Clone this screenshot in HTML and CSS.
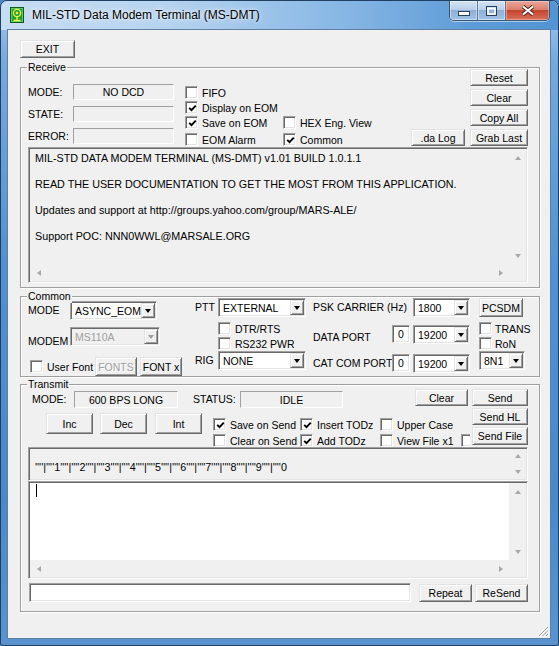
FILE: index.html
```html
<!DOCTYPE html>
<html>
<head>
<meta charset="utf-8">
<title>MS-DMT</title>
<link rel="stylesheet" href="styles.css">
</head>
<body>
<div class="window">
  <div class="titlebar">
    <svg class="appicon" width="14" height="16" viewBox="0 0 14 16">
      <rect x="0.5" y="0.5" width="13" height="15" fill="#23a03a" stroke="#0d5a1b"/>
      <rect x="1.5" y="1.5" width="11" height="13" fill="none" stroke="#5ccc6a"/>
      <circle cx="7" cy="6" r="3.6" fill="none" stroke="#f2ee3c" stroke-width="1.4"/>
      <circle cx="7" cy="6" r="1.3" fill="#f2ee3c"/>
      <path d="M7 9.5 V13 M3.5 13.5 H10.5" stroke="#f2ee3c" stroke-width="1.4" fill="none"/>
    </svg>
    <span class="title">MIL-STD Data Modem Terminal (MS-DMT)</span>
    <div class="caption">
      <div class="cap cap-min">
        <svg width="12" height="5" viewBox="0 0 12 5"><rect x="0.5" y="0.5" width="11" height="4" fill="#fff" stroke="#2b3f58"/></svg>
      </div>
      <div class="cap cap-max">
        <svg width="11" height="10" viewBox="0 0 11 10"><rect x="0.5" y="0.5" width="10" height="9" fill="none" stroke="#2b3f58"/><rect x="2" y="2.5" width="7" height="5.5" fill="none" stroke="#fff" stroke-width="1.6"/></svg>
      </div>
      <div class="cap cap-close">
        <svg width="14" height="11" viewBox="0 0 14 11"><path d="M2 1.5 L12 9.5 M12 1.5 L2 9.5" stroke="#4a1f1a" stroke-width="4" fill="none"/><path d="M2 1.5 L12 9.5 M12 1.5 L2 9.5" stroke="#fff" stroke-width="2.2" fill="none"/></svg>
      </div>
    </div>
  </div>

  <div class="client">
    <div class="btn btn-exit">EXIT</div>

    <div class="group g-receive">
      <span class="legend">Receive</span>
      <div class="rx-top">
        <div class="rx-fields">
          <div class="field-row"><span class="lbl rx-lbl">MODE:</span><div class="static rx-static">NO DCD</div></div>
          <div class="field-row"><span class="lbl rx-lbl">STATE:</span><div class="static rx-static"></div></div>
          <div class="field-row"><span class="lbl rx-lbl">ERROR:</span><div class="static rx-static"></div></div>
        </div>
        <div class="rx-checks">
          <div class="cb"><span class="box"></span><span>FIFO</span></div>
          <div class="cb"><span class="box"><svg width="9" height="9" viewBox="0 0 9 9"><path d="M1.2 3.8 L3.5 6.2 L7.8 1.6" fill="none" stroke="#000" stroke-width="1.9"/></svg></span><span>Display on EOM</span></div>
          <div class="cb"><span class="box"><svg width="9" height="9" viewBox="0 0 9 9"><path d="M1.2 3.8 L3.5 6.2 L7.8 1.6" fill="none" stroke="#000" stroke-width="1.9"/></svg></span><span>Save on EOM</span></div>
          <div class="cb cb-gap"><span class="box"></span><span>EOM Alarm</span></div>
        </div>
        <div class="rx-checks2">
          <div class="cb"><span class="box"></span><span>HEX Eng. View</span></div>
          <div class="cb cb-gap"><span class="box"><svg width="9" height="9" viewBox="0 0 9 9"><path d="M1.2 3.8 L3.5 6.2 L7.8 1.6" fill="none" stroke="#000" stroke-width="1.9"/></svg></span><span>Common</span></div>
        </div>
        <div class="btn btn-dalog">.da Log</div>
        <div class="rx-buttons">
          <div class="btn rx-btn">Reset</div>
          <div class="btn rx-btn">Clear</div>
          <div class="btn rx-btn">Copy All</div>
          <div class="btn rx-btn">Grab Last</div>
        </div>
      </div>
      <div class="memo rx-memo">
        <div class="memo-body rx-text">
          <p>MIL-STD DATA MODEM TERMINAL (MS-DMT) v1.01 BUILD 1.0.1.1</p>
          <p>READ THE USER DOCUMENTATION TO GET THE MOST FROM THIS APPLICATION.</p>
          <p>Updates and support at http://groups.yahoo.com/group/MARS-ALE/</p>
          <p>Support POC: NNN0WWL@MARSALE.ORG</p>
        </div>
        <div class="vscroll"><span class="arr arr-up"></span><span class="arr arr-down"></span></div>
        <div class="hscroll"><span class="arr arr-left"></span><span class="arr arr-right"></span></div>
        <div class="sb-corner"></div>
      </div>
    </div>

    <div class="group g-common">
      <span class="legend">Common</span>
      <div class="cm-col1">
        <div class="cm-row cm-r1">
          <span class="lbl cm-lbl">MODE</span>
          <div class="combo cm-mode"><span class="combo-text">ASYNC_EOM</span><span class="combo-btn"><i class="tri"></i></span></div>
        </div>
        <div class="cm-row cm-r2">
          <span class="lbl cm-lbl cm-lbl-low">MODEM</span>
          <div class="combo combo-disabled cm-modem"><span class="combo-text">MS110A</span><span class="combo-btn"><i class="tri"></i></span></div>
        </div>
        <div class="cm-row cm-r3">
          <div class="cb cb-userfont"><span class="box"></span><span class="userfont-lbl">User Font</span></div>
          <div class="btn btn-disabled btn-font btn-fonts">FONTS</div>
          <div class="btn btn-font btn-fontx">FONT x</div>
        </div>
      </div>
      <div class="cm-col2">
        <div class="cm-row ptt-row">
          <span class="lbl ptt-lbl">PTT</span>
          <div class="combo cm-ptt"><span class="combo-text">EXTERNAL</span><span class="combo-btn"><i class="tri"></i></span></div>
        </div>
        <div class="cb cb-dtr"><span class="box"></span><span>DTR/RTS</span></div>
        <div class="cb cb-rs232"><span class="box"></span><span>RS232 PWR</span></div>
        <div class="cm-row rig-row">
          <span class="lbl ptt-lbl">RIG</span>
          <div class="combo cm-ptt"><span class="combo-text">NONE</span><span class="combo-btn"><i class="tri"></i></span></div>
        </div>
      </div>
      <div class="cm-col3">
        <div class="cm-row psk-row">
          <span class="lbl psk-lbl">PSK CARRIER (Hz)</span>
          <div class="combo cm-num"><span class="combo-text">1800</span><span class="combo-btn"><i class="tri"></i></span></div>
        </div>
        <div class="cm-row dp-row">
          <span class="lbl port-lbl port-lbl-low">DATA PORT</span>
          <div class="edit port-num">0</div>
          <div class="combo cm-num"><span class="combo-text">19200</span><span class="combo-btn"><i class="tri"></i></span></div>
        </div>
        <div class="cm-row cat-row">
          <span class="lbl port-lbl">CAT COM PORT</span>
          <div class="edit port-num">0</div>
          <div class="combo cm-num"><span class="combo-text">19200</span><span class="combo-btn"><i class="tri"></i></span></div>
        </div>
      </div>
      <div class="cm-col4">
        <div class="btn btn-pcsdm">PCSDM</div>
        <div class="cb cb-trans"><span class="box"></span><span>TRANS</span></div>
        <div class="cb cb-ron"><span class="box"></span><span>RoN</span></div>
        <div class="combo cm-8n1"><span class="combo-text">8N1</span><span class="combo-btn"><i class="tri"></i></span></div>
      </div>
    </div>

    <div class="group g-transmit">
      <span class="legend">Transmit</span>
      <div class="tx-top">
        <div class="tx-left">
          <div class="tx-row1">
            <span class="lbl tx-mode-lbl">MODE:</span>
            <div class="static tx-mode">600 BPS LONG</div>
            <span class="lbl tx-status-lbl">STATUS:</span>
            <div class="static tx-status">IDLE</div>
            <div class="btn tx-clear">Clear</div>
          </div>
          <div class="tx-row2">
            <div class="btn tx-step">Inc</div>
            <div class="btn tx-step tx-dec">Dec</div>
            <div class="btn tx-step tx-int">Int</div>
            <div class="tx-checks">
              <div class="cb"><span class="box"><svg width="9" height="9" viewBox="0 0 9 9"><path d="M1.2 3.8 L3.5 6.2 L7.8 1.6" fill="none" stroke="#000" stroke-width="1.9"/></svg></span><span>Save on Send</span></div>
              <div class="cb"><span class="box"><svg width="9" height="9" viewBox="0 0 9 9"><path d="M1.2 3.8 L3.5 6.2 L7.8 1.6" fill="none" stroke="#000" stroke-width="1.9"/></svg></span><span class="todz-lbl">Insert TODz</span></div>
              <div class="cb"><span class="box"></span><span>Upper Case</span></div>
              <div class="cb"><span class="box"></span><span>Clear on Send</span></div>
              <div class="cb"><span class="box"><svg width="9" height="9" viewBox="0 0 9 9"><path d="M1.2 3.8 L3.5 6.2 L7.8 1.6" fill="none" stroke="#000" stroke-width="1.9"/></svg></span><span>Add TODz</span></div>
              <div class="cb cb-view"><span class="box"></span><span>View File</span><span class="x1-lbl">x1</span><span class="box box-x1"></span></div>
            </div>
          </div>
        </div>
        <div class="tx-send">
          <div class="btn send-btn">Send</div>
          <div class="btn send-btn">Send HL</div>
          <div class="btn send-btn send-file">Send File</div>
        </div>
      </div>
      <div class="memo tx-ruler">
        <div class="memo-body ruler-text">''''|''''1''''|''''2''''|''''3''''|''''4''''|''''5''''|''''6''''|''''7''''|''''8''''|''''9''''|''''0</div>
        <div class="vscroll vscroll-short"><span class="arr arr-up"></span><span class="arr arr-down"></span></div>
      </div>
      <div class="memo tx-memo">
        <div class="memo-body tx-body"><span class="caret"></span></div>
        <div class="vscroll"><span class="arr arr-up"></span><span class="arr arr-down"></span></div>
        <div class="hscroll"><span class="arr arr-left"></span><span class="arr arr-right"></span></div>
        <div class="sb-corner"></div>
      </div>
      <div class="tx-bottom">
        <div class="edit tx-input"></div>
        <div class="btn tx-bbtn tx-repeat">Repeat</div>
        <div class="btn tx-bbtn tx-resend">ReSend</div>
      </div>
    </div>

    <svg class="grip" width="11" height="11" viewBox="0 0 11 11">
      <path d="M10 1 L1 10 M10 4.5 L4.5 10 M10 8 L8 10" stroke="#fff" stroke-width="1" fill="none" transform="translate(0.7,0.7)"/>
      <path d="M10 1 L1 10 M10 4.5 L4.5 10 M10 8 L8 10" stroke="#9a9a9a" stroke-width="1" fill="none"/>
    </svg>
  </div>
</div>
</body>
</html>
```

FILE: styles.css
```css
* { box-sizing: border-box; }
html, body { margin: 0; padding: 0; }
body {
  width: 559px;
  height: 646px;
  overflow: hidden;
  background: #4b88c6;
  font-family: "Liberation Sans", Arial, sans-serif;
  font-size: 10.5px;
  color: #000;
}

/* ---------- window frame ---------- */
.window {
  width: 559px;
  height: 646px;
  border: 1px solid #213f60;
  border-radius: 7px 7px 3px 3px;
  padding: 0 8px 7px 7px;
  background: linear-gradient(to bottom, #a8c9ec 0px, #76a9de 60px, #5392d0 260px, #4a89c9 500px, #5994cf 646px);
  display: flex;
  flex-direction: column;
  position: relative;
  overflow: hidden;
}
.titlebar {
  height: 29px;
  margin: 0 -8px 0 -7px;
  padding: 0 8px 0 8px;
  display: flex;
  align-items: flex-start;
  background: linear-gradient(to right, #c7ddf3 0%, #b6d3ef 30%, #86b6e4 62%, #5d9bd7 85%, #5294d4 100%);
  border-radius: 6px 6px 0 0;
}
.appicon { margin: 6px 0 0 1px; flex: none; }
.title {
  margin: 7px 0 0 8px;
  font-size: 12px;
  line-height: 15px;
  color: #000;
  text-shadow: 0 0 6px rgba(255,255,255,0.9), 0 0 3px rgba(255,255,255,0.7);
  white-space: nowrap;
}
.caption {
  margin-left: auto;
  display: flex;
  height: 20px;
  border: 1px solid #3a5675;
  border-top: none;
  border-radius: 0 0 5px 5px;
  overflow: hidden;
  box-shadow: 0 1px 0 rgba(255,255,255,0.5);
}
.cap {
  height: 19px;
  display: flex;
  align-items: center;
  justify-content: center;
}
.cap-min, .cap-max {
  background: linear-gradient(to bottom, #d5e4f3 0%, #b9cfe8 45%, #8fb0d6 50%, #9fc2e6 100%);
  box-shadow: inset 0 0 0 1px rgba(255,255,255,0.45);
}
.cap-min { width: 28px; border-right: 1px solid #5a7899; padding-top: 6px; }
.cap-max { width: 28px; border-right: 1px solid #5a7899; }
.cap-close {
  width: 43px;
  background: linear-gradient(to bottom, #e9a799 0%, #dc7f6b 45%, #c5442d 50%, #d8705a 100%);
  box-shadow: inset 0 0 0 1px rgba(255,220,210,0.45);
}

/* ---------- client ---------- */
.client {
  width: 542px;
  height: 608px;
  background: #f0f0f0;
  padding: 10px 0 0 12px;
  position: relative;
  box-shadow: 0 0 0 1px #5f7ea0;
}
.grip { position: absolute; right: 1px; bottom: 1px; }

/* ---------- common controls ---------- */
.lbl { white-space: nowrap; flex: none; }
.btn {
  display: flex;
  align-items: center;
  justify-content: center;
  flex: none;
  white-space: nowrap;
  background: #f0f0f0;
  border: 1px solid;
  border-color: #e3e3e3 #696969 #696969 #e3e3e3;
  box-shadow: inset 1px 1px 0 #fff, inset -1px -1px 0 #a0a0a0;
}
.btn-disabled { color: #a0a0a0; text-shadow: 1px 1px 0 #fff; }
.static {
  flex: none;
  border: 1px solid;
  border-color: #a0a0a0 #fff #fff #a0a0a0;
  background: #f0f0f0;
  display: flex;
  align-items: center;
  justify-content: center;
  white-space: nowrap;
}
.edit {
  flex: none;
  border: 1px solid;
  border-color: #a0a0a0 #fff #fff #a0a0a0;
  box-shadow: inset 1px 1px 0 #696969, inset -1px -1px 0 #e3e3e3;
  background: #fff;
}
.cb {
  display: flex;
  align-items: center;
  gap: 4px;
  height: 15px;
  white-space: nowrap;
  flex: none;
}
.cb-gap { margin-top: 2px; }
.box {
  width: 13px;
  height: 13px;
  flex: none;
  border: 1px solid;
  border-color: #a0a0a0 #fff #fff #a0a0a0;
  box-shadow: inset 1px 1px 0 #696969, inset -1px -1px 0 #e3e3e3;
  background: #fff;
  display: flex;
  align-items: center;
  justify-content: center;
  padding: 1px 0 0 1px;
}
.combo {
  flex: none;
  display: flex;
  height: 19px;
  padding: 1px;
  border: 1px solid;
  border-color: #a0a0a0 #fff #fff #a0a0a0;
  box-shadow: inset 1px 1px 0 #696969, inset -1px -1px 0 #e3e3e3;
  background: #fff;
}
.combo-text {
  flex: 1;
  padding: 1px 0 0 3px;
  line-height: 14px;
  white-space: nowrap;
  overflow: hidden;
}
.combo-btn {
  width: 14px;
  height: 15px;
  flex: none;
  display: flex;
  align-items: center;
  justify-content: center;
  background: #f0f0f0;
  border: 1px solid;
  border-color: #e3e3e3 #696969 #696969 #e3e3e3;
  box-shadow: inset 1px 1px 0 #fff, inset -1px -1px 0 #a0a0a0;
}
.tri {
  width: 0;
  height: 0;
  border-left: 3.5px solid transparent;
  border-right: 3.5px solid transparent;
  border-top: 4px solid #000;
}
.combo-disabled { background: #f0f0f0; color: #a0a0a0; }
.combo-disabled .tri { border-top-color: #a0a0a0; }

/* ---------- group boxes ---------- */
.group {
  position: relative;
  width: 520px;
  border: 1px solid #a0a0a0;
  box-shadow: inset 1px 1px 0 #fff, 1px 1px 0 #fff;
}
.legend {
  position: absolute;
  top: -7px;
  left: 6px;
  padding: 0 1px;
  line-height: 13px;
  background: #f0f0f0;
}

/* ---------- memo boxes ---------- */
.memo {
  display: grid;
  grid-template-columns: 1fr 17px;
  grid-template-rows: 1fr 17px;
  padding: 1px;
  border: 1px solid;
  border-color: #a0a0a0 #fff #fff #a0a0a0;
  box-shadow: inset 1px 1px 0 #696969, inset -1px -1px 0 #e3e3e3;
  background: #f0f0f0;
}
.memo-body { overflow: hidden; white-space: nowrap; }
.vscroll {
  display: flex;
  flex-direction: column;
  justify-content: space-between;
  background: #f0f0f0;
}
.hscroll {
  display: flex;
  justify-content: space-between;
  background: #f0f0f0;
}
.sb-corner { background: #f0f0f0; }
.arr {
  width: 17px;
  height: 17px;
  display: flex;
  align-items: center;
  justify-content: center;
}
.arr::before {
  content: "";
  width: 0;
  height: 0;
}
.arr-up::before { border-left: 3.5px solid transparent; border-right: 3.5px solid transparent; border-bottom: 4px solid #a8a8a8; }
.arr-down::before { border-left: 3.5px solid transparent; border-right: 3.5px solid transparent; border-top: 4px solid #a8a8a8; }
.arr-left::before { border-top: 3.5px solid transparent; border-bottom: 3.5px solid transparent; border-right: 4px solid #a8a8a8; }
.arr-right::before { border-top: 3.5px solid transparent; border-bottom: 3.5px solid transparent; border-left: 4px solid #a8a8a8; }

/* ---------- EXIT ---------- */
.btn-exit { width: 55px; height: 18px; }

/* ---------- Receive ---------- */
.g-receive { margin-top: 9px; height: 221px; padding-top: 1px; }
.rx-top { display: flex; align-items: flex-start; height: 77px; }
.rx-fields {
  margin: 15px 0 0 7px;
  width: 146px;
  display: flex;
  flex-direction: column;
  gap: 6px;
}
.field-row { display: flex; height: 16px; }
.rx-lbl { width: 45px; line-height: 17px; }
.rx-static { width: 101px; height: 16px; }
.rx-checks {
  margin: 16px 0 0 11px;
  width: 98px;
  display: flex;
  flex-direction: column;
}
.rx-checks2 {
  margin-top: 46px;
  width: 128px;
  display: flex;
  flex-direction: column;
}
.btn-dalog { margin-top: 60px; width: 54px; height: 17px; }
.rx-buttons {
  margin-left: 5px;
  display: flex;
  flex-direction: column;
  gap: 3px;
}
.rx-btn { width: 58px; height: 17px; }
.rx-memo { margin: 1px 0 0 7px; width: 500px; height: 136px; }
.rx-text { padding: 3px 0 0 5px; font-size: 10.75px; }
.rx-text p { margin: 0 0 13px; line-height: 13px; }

/* ---------- Common ---------- */
.g-common {
  margin-top: 8px;
  height: 81px;
  display: flex;
  align-items: flex-start;
}
.cm-row { display: flex; align-items: flex-start; }
.cm-col1 { margin-left: 7px; width: 154px; }
.cm-r1 { margin-top: 4px; }
.cm-r2 { margin-top: 7px; }
.cm-r3 { margin-top: 6px; align-items: center; }
.cm-lbl { width: 42px; line-height: 19px; }
.cm-lbl-low { line-height: 19px; padding-top: 5px; }
.cm-mode { width: 87px; }
.cm-modem { width: 90px; }
.cb-userfont { margin-left: 2px; }
.userfont-lbl { width: 47px; }
.btn-font { width: 42px; height: 19px; }
.btn-fonts { margin-left: 1px; }
.btn-fontx { margin-left: 3px; }
.cm-col2 { margin-left: 13px; width: 111px; display: flex; flex-direction: column; }
.ptt-row { margin-top: 1px; }
.ptt-lbl { width: 23px; line-height: 19px; }
.cm-ptt { width: 88px; }
.cb-dtr { margin: 5px 0 0 23px; height: 13px; }
.cb-rs232 { margin: 2px 0 0 23px; height: 13px; }
.rig-row { margin-top: 1px; }
.cm-col3 { margin-left: 7px; width: 157px; }
.psk-row { margin-top: 1px; }
.psk-lbl { width: 100px; line-height: 19px; }
.dp-row { margin-top: 8px; }
.cat-row { margin-top: 7px; }
.port-lbl { width: 79px; line-height: 19px; }
.port-lbl-low { padding-top: 3px; }
.port-num {
  width: 18px;
  height: 18px;
  margin-right: 3px;
  display: flex;
  align-items: center;
  justify-content: center;
}
.cm-num { width: 57px; }
.cm-col4 { margin-left: 9px; display: flex; flex-direction: column; }
.btn-pcsdm { margin-top: 1px; width: 44px; height: 19px; }
.cb-trans { margin-top: 5px; height: 13px; gap: 3px; }
.cb-ron { margin-top: 2px; height: 13px; gap: 3px; }
.cm-8n1 { margin-top: 1px; width: 46px; }

/* ---------- Transmit ---------- */
.g-transmit { margin-top: 7px; height: 228px; }
.tx-top { display: flex; align-items: flex-start; height: 61px; }
.tx-left { width: 449px; overflow: hidden; display: flex; flex-direction: column; }
.tx-row1 { margin-top: 4px; display: flex; align-items: flex-start; height: 19px; }
.tx-mode-lbl { margin: 2px 0 0 11px; width: 42px; line-height: 17px; }
.tx-mode { margin-top: 2px; width: 104px; height: 17px; }
.tx-status-lbl { margin: 2px 0 0 15px; width: 47px; line-height: 17px; }
.tx-status { margin-top: 2px; width: 103px; height: 17px; }
.tx-clear { margin-left: 72px; width: 53px; height: 17px; }
.tx-row2 { margin-top: 5px; display: flex; align-items: flex-start; }
.tx-step { width: 47px; height: 21px; }
.tx-row2 .tx-step:first-child { margin-left: 25px; }
.tx-dec { margin-left: 7px; }
.tx-int { margin-left: 8px; }
.tx-checks {
  margin: 5px 0 0 11px;
  display: grid;
  grid-template-columns: 87px 80px auto;
  row-gap: 3px;
}
.tx-checks .cb { height: 13px; }
.todz-lbl { width: 56px; overflow: hidden; }
.x1-lbl { margin-left: -1px; }
.box-x1 { margin-left: 3px; }
.tx-send { margin: 4px 0 0 2px; display: flex; flex-direction: column; gap: 2px; }
.send-btn { width: 56px; height: 17px; }
.send-file { height: 18px; }
.tx-ruler {
  margin: 1px 0 0 7px;
  width: 500px;
  height: 34px;
  grid-template-rows: 1fr;
}
.ruler-text { padding: 12px 0 0 5px; line-height: 13px; font-size: 10.75px; }
.vscroll-short .arr { height: 14px; }
.tx-memo {
  margin-left: 7px;
  width: 500px;
  height: 98px;
}
.tx-body { background: #fff; }
.caret { display: block; width: 1px; height: 13px; background: #000; margin: 1px 0 0 6px; }
.tx-bottom { margin-top: 4px; display: flex; align-items: flex-start; }
.tx-input { margin-left: 8px; width: 382px; height: 19px; }
.tx-bbtn { margin-top: 1px; width: 53px; height: 18px; }
.tx-repeat { margin-left: 8px; }
.tx-resend { margin-left: 3px; }
```
